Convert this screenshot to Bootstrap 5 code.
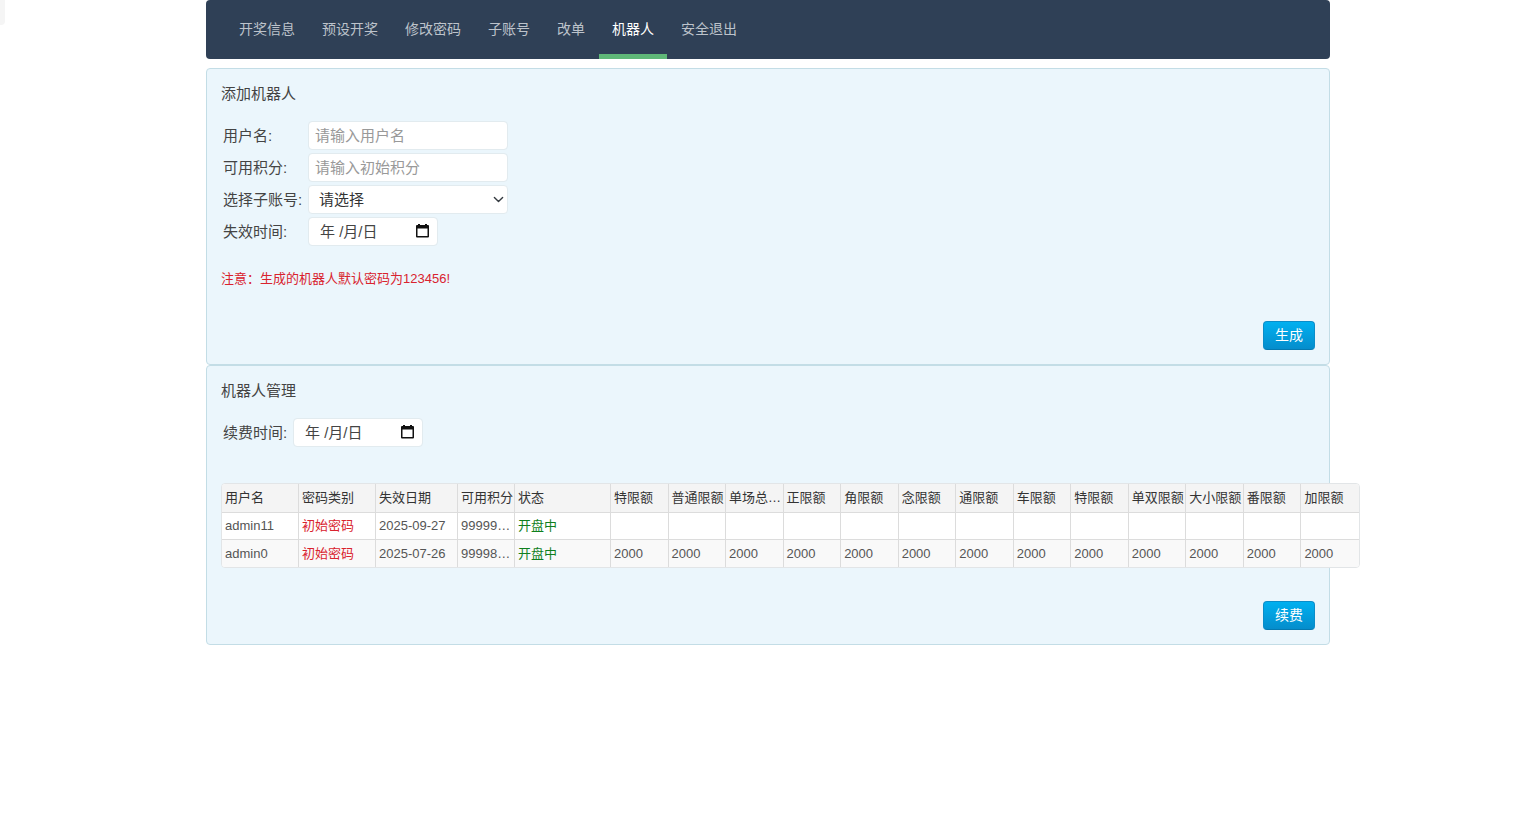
<!DOCTYPE html>
<html lang="zh-CN">
<head>
<meta charset="utf-8">
<meta name="viewport" content="width=device-width, initial-scale=1">
<title>机器人</title>
<link href="https://cdn.jsdelivr.net/npm/bootstrap@5.3.0/dist/css/bootstrap.min.css" rel="stylesheet">
<style>
body { font-family: "Liberation Sans", "Noto Sans CJK SC", sans-serif; font-size: 15px; line-height: 20px; color: #444; background: #fff; overflow-x: hidden; }
.page { max-width: 1124px; }
.corner-tab { left: 0; top: 0; width: 5px; height: 25px; background: #f5f5f5; border-radius: 0 0 4px 0; }
.topbar { background: #2f4056; border-radius: 4px; height: 59px; padding: 0 20px; margin-bottom: 9px; }
.topbar .nav { gap: 1px; }
.topbar .nav-link { color: #bdc3cb; font-size: 14px; line-height: 58px; height: 59px; padding: 0 13px; }
.topbar .nav-link.active { color: #fff; border-bottom: 5px solid #5fb878; }
.panel { background: #ebf6fc; border: 1px solid #c3dde6; border-radius: 4px; padding: 15px 14px 14px; }
.panel h2 { font-size: 15px; line-height: 20px; margin: 0 0 17px; font-weight: 400; }
.fields { display: grid; grid-template-columns: 85px 200px; row-gap: 3px; align-items: center; padding-left: 2px; }
.fields-tight { grid-template-columns: 70px 130px; }
.fields label { white-space: nowrap; }
.fields .form-control, .fields .form-select { height: 29px; font-size: 15px; line-height: 20px; padding: 0 6px; border: 1px solid #e2ebef; border-radius: 4px; color: #444; }
.fields .form-control::placeholder { color: #999; opacity: 1; }
.fields .form-select { padding-left: 10px; color: #333; background-size: 11px 11px; background-position: right 3px center; }
.datebox { width: 130px; }
.fields .datebox .form-control { padding-left: 11px; }
.fields .datebox .form-control::placeholder { color: #444; }
.datebox button { right: 9px; top: 7px; line-height: 0; }
.note { color: #d9232e; font-size: 13px; line-height: 20px; margin: 23px 0 32px; }
.btn-go { width: 52px; height: 29px; padding: 0; font-size: 14px; line-height: 27px; color: #fff; background: linear-gradient(#00b0f0, #058dcc); border: 1px solid #0a8dc9; border-bottom-color: #0579b0; border-radius: 4px; }
.btn-go:hover { color: #fff; }
.limits { width: 1139px; table-layout: fixed; border-collapse: separate; border-spacing: 0; font-size: 13px; line-height: 18px; margin: 36px 0 33px; border: 1px solid #e2e5e7; border-radius: 4px; background: #fff; overflow: hidden; }
.limits th, .limits td { padding: 0 0 0 3px; white-space: nowrap; border-right: 1px solid #dcdcdc; }
.limits th { height: 29px; font-weight: 400; color: #333; background: #f4f4f4; border-bottom: 1px solid #dcdcdc; }
.limits td { height: 27px; color: #555; }
.limits tbody tr:first-child td { border-bottom: 1px solid #dcdcdc; }
.limits tbody tr:last-child { background: #f9f9f9; }
.limits th:last-child, .limits td:last-child { border-right: 0; }
.limits tbody .st-init { color: #d9232e; }
.limits tbody .st-open { color: #0f7f1d; }
.w-user { width: 77px; } .w-date { width: 82px; } .w-pts { width: 57px; } .w-state { width: 96px; }
</style>
</head>
<body>
<div class="corner-tab position-absolute"></div>
<div class="page mx-auto">
  <nav class="topbar">
    <ul class="nav">
      <li class="nav-item"><a class="nav-link" href="#">开奖信息</a></li>
      <li class="nav-item"><a class="nav-link" href="#">预设开奖</a></li>
      <li class="nav-item"><a class="nav-link" href="#">修改密码</a></li>
      <li class="nav-item"><a class="nav-link" href="#">子账号</a></li>
      <li class="nav-item"><a class="nav-link" href="#">改单</a></li>
      <li class="nav-item"><a class="nav-link active" aria-current="page" href="#">机器人</a></li>
      <li class="nav-item"><a class="nav-link" href="#">安全退出</a></li>
    </ul>
  </nav>

  <form class="panel">
    <h2>添加机器人</h2>
    <div class="fields">
      <label for="user">用户名:</label>
      <input id="user" type="text" class="form-control" placeholder="请输入用户名">
      <label for="points">可用积分:</label>
      <input id="points" type="text" class="form-control" placeholder="请输入初始积分">
      <label for="sub">选择子账号:</label>
      <select id="sub" class="form-select"><option>请选择</option></select>
      <label for="expire">失效时间:</label>
      <div class="datebox position-relative">
        <input id="expire" type="text" class="form-control" placeholder="年 /月/日">
        <button type="button" class="position-absolute border-0 bg-transparent p-0" aria-label="日历">
          <svg width="13" height="14" viewBox="0 0 13 14"><path fill="#111" d="M2 0h2v1h5V0h2v1h1q1 0 1 1v10.500q0 1-1 1h-11q-1 0-1-1V2q0-1 1-1h1zM1.500 4.500V12h10V4.500z"/></svg>
        </button>
      </div>
    </div>
    <p class="note">注意：生成的机器人默认密码为123456!</p>
    <div class="d-flex justify-content-end"><button type="button" class="btn btn-go">生成</button></div>
  </form>

  <form class="panel">
    <h2>机器人管理</h2>
    <div class="fields fields-tight">
      <label for="renew">续费时间:</label>
      <div class="datebox position-relative">
        <input id="renew" type="text" class="form-control" placeholder="年 /月/日">
        <button type="button" class="position-absolute border-0 bg-transparent p-0" aria-label="日历">
          <svg width="13" height="14" viewBox="0 0 13 14"><path fill="#111" d="M2 0h2v1h5V0h2v1h1q1 0 1 1v10.500q0 1-1 1h-11q-1 0-1-1V2q0-1 1-1h1zM1.500 4.500V12h10V4.500z"/></svg>
        </button>
      </div>
    </div>
    <table class="limits">
      <colgroup><col class="w-user"><col class="w-user"><col class="w-date"><col class="w-pts"><col class="w-state"><col span="13"></colgroup>
      <thead>
        <tr><th>用户名</th><th>密码类别</th><th>失效日期</th><th>可用积分</th><th>状态</th><th>特限额</th><th>普通限额</th><th>单场总…</th><th>正限额</th><th>角限额</th><th>念限额</th><th>通限额</th><th>车限额</th><th>特限额</th><th>单双限额</th><th>大小限额</th><th>番限额</th><th>加限额</th></tr>
      </thead>
      <tbody>
        <tr><td>admin11</td><td class="st-init">初始密码</td><td>2025-09-27</td><td>99999…</td><td class="st-open">开盘中</td><td></td><td></td><td></td><td></td><td></td><td></td><td></td><td></td><td></td><td></td><td></td><td></td><td></td></tr>
        <tr><td>admin0</td><td class="st-init">初始密码</td><td>2025-07-26</td><td>99998…</td><td class="st-open">开盘中</td><td>2000</td><td>2000</td><td>2000</td><td>2000</td><td>2000</td><td>2000</td><td>2000</td><td>2000</td><td>2000</td><td>2000</td><td>2000</td><td>2000</td><td>2000</td></tr>
      </tbody>
    </table>
    <div class="d-flex justify-content-end"><button type="button" class="btn btn-go">续费</button></div>
  </form>
</div>
<script src="https://cdn.jsdelivr.net/npm/bootstrap@5.3.0/dist/js/bootstrap.bundle.min.js"></script>
</body>
</html>
